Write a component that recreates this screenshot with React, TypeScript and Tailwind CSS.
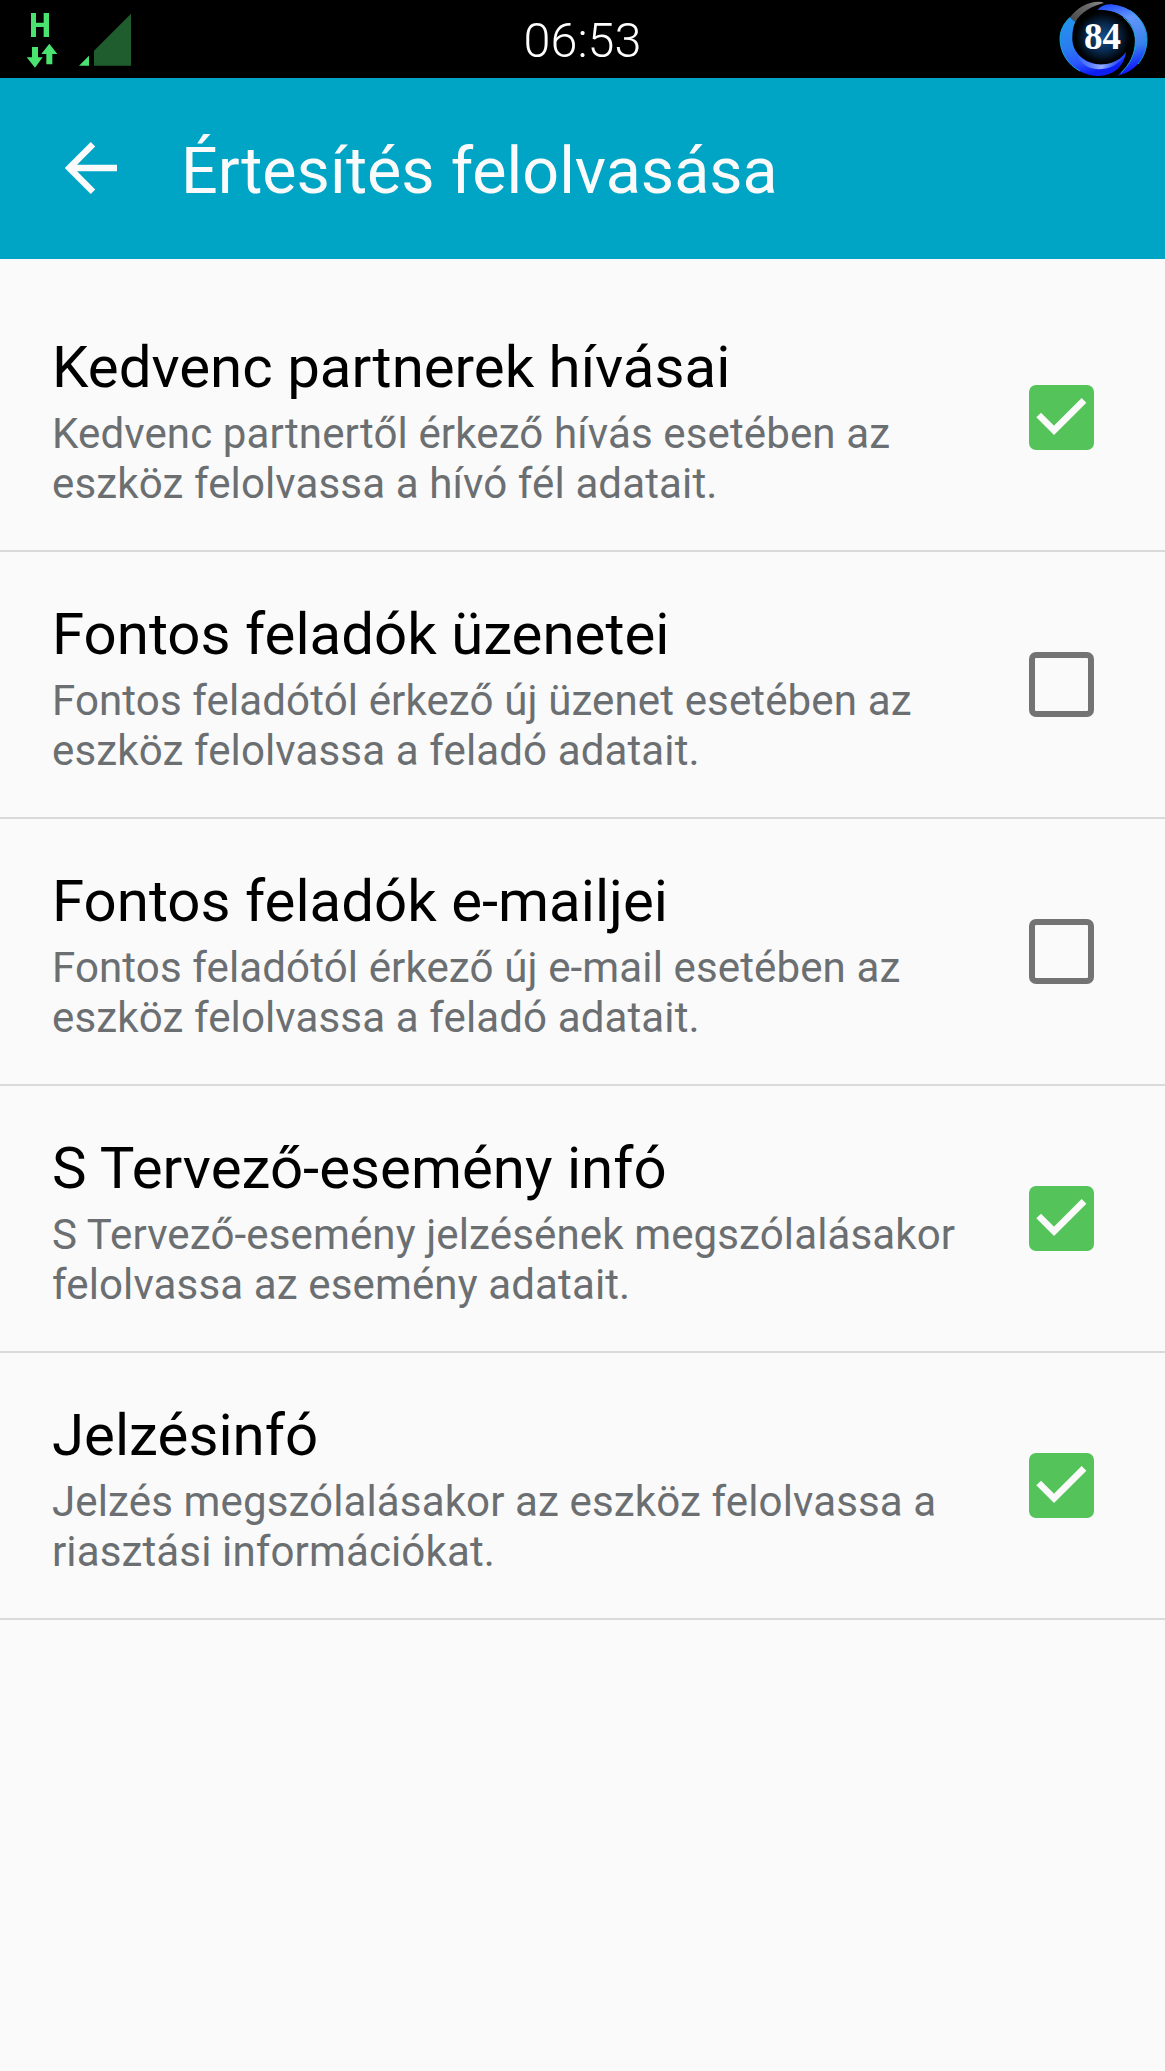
const items = [
  { title: 'Kedvenc partnerek hívásai', lines: ['Kedvenc partnertől érkező hívás esetében az', 'eszköz felolvassa a hívó fél adatait.'], checked: true },
  { title: 'Fontos feladók üzenetei', lines: ['Fontos feladótól érkező új üzenet esetében az', 'eszköz felolvassa a feladó adatait.'], checked: false },
  { title: 'Fontos feladók e-mailjei', lines: ['Fontos feladótól érkező új e-mail esetében az', 'eszköz felolvassa a feladó adatait.'], checked: false },
  { title: 'S Tervező-esemény infó', lines: ['S Tervező-esemény jelzésének megszólalásakor', 'felolvassa az esemény adatait.'], checked: true },
  { title: 'Jelzésinfó', lines: ['Jelzés megszólalásakor az eszköz felolvassa a', 'riasztási információkat.'], checked: true },
];

function NetworkIcons() {
  return (
    <svg className="h-[77px] w-[160px]" viewBox="0 0 480 231" aria-label="H">
      <g fill="#4be36f">
        <path d="M93 39h15v29h23V39h16v72h-16V81h-23v30H93z" />
        <path d="M96 141h18v31h14l-23 31-25-31h16z" />
        <path d="M139 193v-31h-15l24-31 24 31h-15v31z" />
        <path d="M237 197l30-30v30z" />
      </g>
      <path d="M282 197v-45L393 41v156z" fill="#1f5c2e" />
    </svg>
  );
}

function BatteryRing() {
  return (
    <div className="relative h-[77px] w-[130px]">
      <svg className="h-[77px] w-[130px]" viewBox="0 0 390 231">
        <defs>
          <radialGradient id="core">
            <stop offset="0" stopColor="#12518f" />
            <stop offset="0.55" stopColor="#08294d" />
            <stop offset="1" stopColor="#000" />
          </radialGradient>
          <linearGradient id="left" x1="0" y1="0" x2="0.3" y2="1">
            <stop offset="0" stopColor="#2196ee" />
            <stop offset="0.5" stopColor="#2a7df0" />
            <stop offset="0.8" stopColor="#2a55ff" />
            <stop offset="1" stopColor="#0d1ef5" />
          </linearGradient>
          <linearGradient id="right" x1="0" y1="0" x2="0.2" y2="1">
            <stop offset="0" stopColor="#1742ff" />
            <stop offset="0.3" stopColor="#6397fa" />
            <stop offset="0.7" stopColor="#3682ec" />
            <stop offset="1" stopColor="#1421ff" />
          </linearGradient>
          <linearGradient id="sheen" x1="0" y1="0" x2="1" y2="0.1">
            <stop offset="0" stopColor="#6b9cff" stopOpacity="0.1" />
            <stop offset="0.6" stopColor="#a3baff" stopOpacity="0.9" />
            <stop offset="1" stopColor="#4a8dff" stopOpacity="0.2" />
          </linearGradient>
          <linearGradient id="spent" x1="0" y1="1" x2="1" y2="0">
            <stop offset="0" stopColor="#4a4a4a" />
            <stop offset="0.6" stopColor="#666" />
            <stop offset="1" stopColor="#8b8b8b" />
          </linearGradient>
        </defs>
        <ellipse cx="203" cy="113" rx="82" ry="76" fill="url(#core)" />
        <path d="M105 52C126 24 158 5 190 5Q202 5 207 9C172 18 139 35 121 66z" fill="url(#spent)" />
        <path d="M105 52C85 72 75 92 75 118C76 178 128 228 191 228C236 226 267 200 273 156C253 183 226 195 199 194C148 191 110 158 112 112C112 94 115 78 121 66z" fill="url(#left)" />
        <path d="M105 52C85 72 75 92 75 118C76 160 100 195 135 213" fill="none" stroke="#16a8dc" strokeWidth="3" />
        <path d="M125 162C155 196 217 210 268 166C250 196 222 208 190 208C157 206 137 190 125 162z" fill="url(#sheen)" />
        <path d="M187 29C202 14 218 11 237 14C294 21 336 65 336 118C336 170 301 218 247 227C282 202 301 166 301 124C302 73 263 27 187 29z" fill="url(#right)" />
        <path d="M265 52C290 74 302 98 301 124C301 160 284 196 257 219" fill="none" stroke="#20a9dc" strokeWidth="3" />
        <path d="M285 31C318 52 336 85 336 118C336 145 326 172 309 192" fill="none" stroke="#16a0d4" strokeWidth="3" />
      </svg>
      <span className="absolute left-[49px] top-[17px] font-['Liberation_Serif'] text-[37px] font-bold leading-[40px] text-white">84</span>
    </div>
  );
}

function Checkbox({ checked }: { checked: boolean }) {
  if (!checked) {
    return <div className="size-[65px] rounded-[7px] border-6 border-[#737373]" />;
  }
  return (
    <div className="size-[65px] rounded-[7px] bg-[#54c45a]">
      <svg className="size-[65px]" viewBox="0 0 195 195" fill="none">
        <path d="M29 90L75 136L165 46" stroke="#fafafa" strokeWidth="20" />
      </svg>
    </div>
  );
}

export default function App() {
  return (
    <div className="flex min-h-[2071px] w-full flex-col bg-[#fafafa] font-['Roboto',sans-serif]">
      <div className="flex h-[77.5px] items-start justify-between bg-black">
        <NetworkIcons />
        <span className="mt-[12px] text-[48.5px] font-light leading-[57px] text-white">06:53</span>
        <div className="flex w-[160px] justify-end">
          <BatteryRing />
        </div>
      </div>
      <header className="flex h-[181.5px] items-center bg-[#00a5c5] pl-[65px]">
        <svg className="h-[52px] w-[52px]" viewBox="0 0 156 156" fill="none" stroke="#fafafa" strokeWidth="19">
          <path d="M84 7L13 78L84 149M10 78H156" />
        </svg>
        <h1 className="ml-[64px] mt-[6px] whitespace-nowrap text-[64.6px] font-normal leading-[76px] text-[#fafafa]">Értesítés felolvasása</h1>
      </header>
      <main className="pt-[26px]">
        {items.map((item) => (
          <section key={item.title} className="flex h-[267px] items-start justify-between border-b-2 border-[#dadada] pl-[52px] pr-[71px]">
            <div className="whitespace-nowrap pt-[48px]">
              <h2 className="text-[58.2px] font-normal leading-[68px] text-black">{item.title}</h2>
              <p className="mt-[8px] text-[42.07px] leading-[50px] tracking-[0.11px] text-[#6b6f72]">
                {item.lines.map((line) => (
                  <span key={line} className="block">{line}</span>
                ))}
              </p>
            </div>
            <div className="mt-[100px]">
              <Checkbox checked={item.checked} />
            </div>
          </section>
        ))}
      </main>
    </div>
  );
}
